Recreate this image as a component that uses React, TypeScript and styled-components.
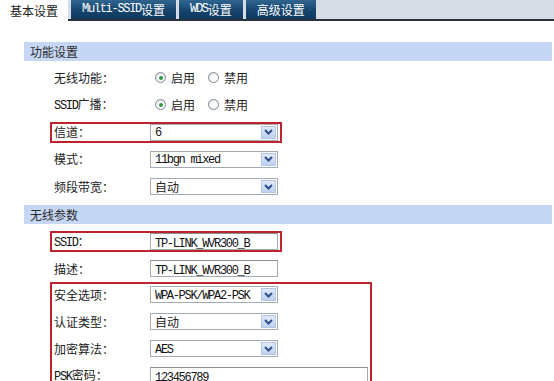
import styled, { createGlobalStyle } from "styled-components";

const red = "#bd232c";

const GlobalStyle = createGlobalStyle`
  html, body {
    margin: 0;
    background: #ffffff;
    font-family: "Noto Sans CJK SC", "Liberation Sans", sans-serif;
    font-size: 12px;
    color: #222222;
  }
`;

const Latin = styled.span`
  font-family: "Liberation Mono", "Noto Sans CJK SC", monospace;
  font-size: 12px;
  letter-spacing: -1.3px;
  color: #111111;
`;

const TabBar = styled.div`
  display: flex;
  height: 19px;
  background: #d6dde6;
  border-bottom: 2px solid #29323c;
`;

const Tab = styled.div<{ $active?: boolean }>`
  display: flex;
  align-items: center;
  box-sizing: border-box;
  padding: 0 11px;
  margin-left: ${(p) => (p.$active ? 0 : 3)}px;
  height: ${(p) => (p.$active ? 21 : 19)}px;
  line-height: 19px;
  white-space: nowrap;
  color: ${(p) => (p.$active ? "#222" : "#ffffff")};
  background: ${(p) =>
    p.$active ? "#ffffff" : "linear-gradient(#2f6590, #15436b 60%, #0f3a60)"};
  ${(p) => p.$active && "width: 68px; justify-content: center;"}

  ${Latin} {
    color: inherit;
  }
`;

const Content = styled.div`
  padding: 21px 2px 0 24px;
`;

const SectionHeader = styled.div<{ $gap?: number }>`
  height: 19px;
  line-height: 19px;
  padding-left: 6px;
  margin-bottom: ${(p) => p.$gap ?? 6}px;
  background: #c6d7f5;
  color: #2b2b2b;
`;

const Rows = styled.div<{ $after?: number }>`
  display: flex;
  flex-direction: column;
  gap: 6.25px;
  margin-bottom: ${(p) => p.$after ?? 0}px;
`;

const Row = styled.div<{ $marked?: boolean; $nested?: boolean }>`
  display: flex;
  align-items: center;
  box-sizing: border-box;
  height: 21px;
  width: ${(p) => (p.$nested ? "auto" : "232px")};
  margin-left: ${(p) => (p.$nested ? 0 : 26)}px;
  padding: 0 2px;
  border: 2px solid ${(p) => (p.$marked ? red : "transparent")};
  ${(p) => p.$nested && "border-left: 0; border-right: 0;"}
`;

const Group = styled.div`
  display: flex;
  flex-direction: column;
  gap: 6px;
  box-sizing: border-box;
  width: 322px;
  margin: -3.5px 0 0 26px;
  border: 2px solid ${red};
  border-bottom: 0;
  padding-bottom: 6px;
`;

const Label = styled.div`
  width: 96px;
  flex: none;
  white-space: nowrap;
  line-height: 16px;
`;

const RadioOption = styled.label`
  display: flex;
  align-items: center;
  gap: 5px;
  margin-left: 5px;
  margin-right: 8px;
`;

const RadioDot = styled.span<{ $checked?: boolean }>`
  position: relative;
  width: 11px;
  height: 11px;
  box-sizing: border-box;
  border-radius: 50%;
  border: 1px solid #7c8894;
  background: radial-gradient(circle at 60% 65%, #ffffff 30%, #d8dde2);
  &::after {
    content: "";
    display: ${(p) => (p.$checked ? "block" : "none")};
    position: absolute;
    left: 2.5px;
    top: 2.5px;
    width: 4px;
    height: 4px;
    border-radius: 50%;
    background: #2f9b44;
  }
`;

const SelectBox = styled.div`
  display: flex;
  align-items: center;
  box-sizing: border-box;
  width: 128px;
  height: 17px;
  border: 1px solid #a3abb4;
  background: #ffffff;
  padding: 0 1px 0 4px;
`;

const SelectText = styled.span`
  flex: 1;
  white-space: nowrap;
  overflow: hidden;
  line-height: 15px;
`;

const SelectButton = styled.span`
  display: flex;
  align-items: center;
  justify-content: center;
  box-sizing: border-box;
  width: 15px;
  height: 13px;
  border: 1px solid #b4c6e4;
  background: linear-gradient(#e0e9f8, #bfd1f0);
`;

const TextBox = styled.div<{ $width: number }>`
  box-sizing: border-box;
  width: ${(p) => p.$width}px;
  height: 17px;
  line-height: 15px;
  padding-left: 4px;
  border: 1px solid #a3abb4;
  border-top-color: #8b9095;
  background: #ffffff;
  white-space: nowrap;
`;

const Chevron = () => (
  <svg width="9" height="6" viewBox="0 0 9 6">
    <path d="M1 1 L4.5 4.5 L8 1" fill="none" stroke="#2d4f8e" strokeWidth="2" />
  </svg>
);

const Select = ({ children }: { children: React.ReactNode }) => (
  <SelectBox>
    <SelectText>{children}</SelectText>
    <SelectButton>
      <Chevron />
    </SelectButton>
  </SelectBox>
);

const RadioPair = () => (
  <>
    <RadioOption>
      <RadioDot $checked />
      启用
    </RadioOption>
    <RadioOption>
      <RadioDot />
      禁用
    </RadioOption>
  </>
);

export default function App() {
  return (
    <>
      <GlobalStyle />
      <TabBar>
        <Tab $active>基本设置</Tab>
        <Tab>
          <Latin>Multi-SSID</Latin>设置
        </Tab>
        <Tab>
          <Latin>WDS</Latin>设置
        </Tab>
        <Tab>高级设置</Tab>
      </TabBar>
      <Content>
        <SectionHeader>功能设置</SectionHeader>
        <Rows $after={8}>
          <Row>
            <Label>无线功能：</Label>
            <RadioPair />
          </Row>
          <Row>
            <Label>
              <Latin>SSID</Latin>广播：
            </Label>
            <RadioPair />
          </Row>
          <Row $marked>
            <Label>信道：</Label>
            <Select>
              <Latin>6</Latin>
            </Select>
          </Row>
          <Row>
            <Label>模式：</Label>
            <Select>
              <Latin>11bgn mixed</Latin>
            </Select>
          </Row>
          <Row>
            <Label>频段带宽：</Label>
            <Select>自动</Select>
          </Row>
        </Rows>
        <SectionHeader $gap={7}>无线参数</SectionHeader>
        <Rows>
          <Row $marked>
            <Label>
              <Latin>SSID</Latin>：
            </Label>
            <TextBox $width={129}>
              <Latin>TP-LINK_WVR300_B</Latin>
            </TextBox>
          </Row>
          <Row>
            <Label>描述：</Label>
            <TextBox $width={131}>
              <Latin>TP-LINK_WVR300_B</Latin>
            </TextBox>
          </Row>
          <Group>
            <Row $nested>
              <Label>安全选项：</Label>
              <Select>
                <Latin>WPA-PSK/WPA2-PSK</Latin>
              </Select>
            </Row>
            <Row $nested>
              <Label>认证类型：</Label>
              <Select>自动</Select>
            </Row>
            <Row $nested>
              <Label>加密算法：</Label>
              <Select>
                <Latin>AES</Latin>
              </Select>
            </Row>
            <Row $nested>
              <Label>
                <Latin>PSK</Latin>密码：
              </Label>
              <TextBox $width={219}>
                <Latin>123456789</Latin>
              </TextBox>
            </Row>
          </Group>
        </Rows>
      </Content>
    </>
  );
}
